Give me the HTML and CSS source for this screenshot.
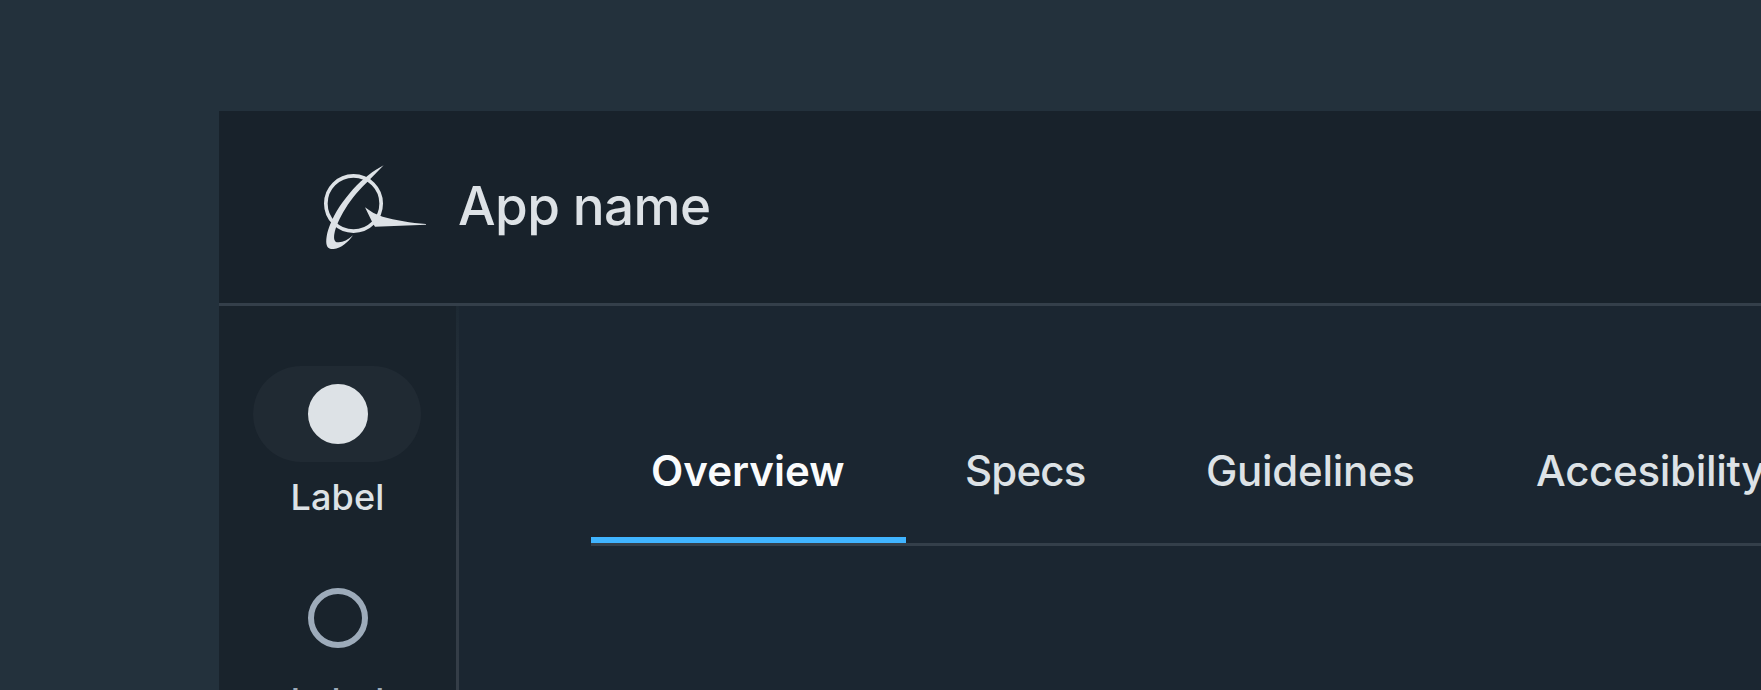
FILE: index.html
```
<!DOCTYPE html>
<html lang="en">
<head>
<meta charset="utf-8">
<title>App name</title>
<link rel="stylesheet" href="styles.css">
</head>
<body>
<div class="app">
  <header class="header">
    <svg class="logo" viewBox="0 0 390 315" aria-hidden="true">
      <circle cx="130.5" cy="145.5" r="83" fill="none" stroke="currentColor" stroke-width="11"/>
      <path fill="currentColor" d="M221 31C190 48 160 69 129 103C96 141 75 173 61 207C51 231 48 250 49 265C51 279 58 283 71 282C94 280 113 263 129 241C113 255 98 263 84 262C72 262 71 250 73 237C77 214 89 188 106 161C127 127 150 102 175 78Z"/>
      <path fill="currentColor" d="M165 157C181 169 196 179 218 185C256 196 303 203 348 207V209L195 215L188 204Z"/>
    </svg>
    <h1 class="title">App name</h1>
  </header>
  <div class="body">
    <nav class="rail">
      <a class="rail-item rail-item-active">
        <span class="pill"><span class="dot"></span></span>
        <span class="rail-label">Label</span>
      </a>
      <a class="rail-item">
        <span class="pill"><span class="dot"></span></span>
        <span class="rail-label">Label</span>
      </a>
    </nav>
    <main class="main">
      <nav class="tabs">
        <a class="tab tab-active">Overview</a>
        <a class="tab tab-specs">Specs</a>
        <a class="tab tab-guidelines">Guidelines</a>
        <a class="tab tab-accessibility">Accesibility</a>
      </nav>
    </main>
  </div>
</div>
</body>
</html>
```
FILE: styles.css
```
* { box-sizing: border-box; }

body {
  margin: 0;
  height: 690px;
  overflow: hidden;
  padding: 111px 0 0 219px;
  background: #23313c;
  color: #dde2e6;
  font-family: Inter, "Noto Sans", sans-serif;
  font-weight: 500;
}

.app {
  height: 579px;
  display: flex;
  flex-direction: column;
  overflow: hidden;
}

.header {
  flex: none;
  height: 195px;
  display: flex;
  padding: 44px 0 0 91px;
  background: #18222b;
  border-bottom: 3px solid #343f4a;
}

.logo { width: 130px; height: 105px; flex: none; }

.title {
  margin: 18px 0 0 18px;
  font-size: 53px;
  line-height: 66px;
  font-weight: 540;
  letter-spacing: -0.6px;
}

.body { flex: 1; display: flex; min-height: 0; }

.rail {
  flex: none;
  width: 240px;
  padding: 60px 0 0 0;
  display: flex;
  flex-direction: column;
  align-items: center;
  gap: 60px;
  background: #19232c;
  border-right: 3px solid;
  border-image: linear-gradient(#1d2933, #343d47 60%) 1;
  border-width: 0 3px 0 0;
}

.rail-item {
  width: 237px;
  height: 144px;
  flex: none;
  display: flex;
  flex-direction: column;
  align-items: center;
  color: #9dabba;
}

.rail-item-active { color: #dde2e6; }

.pill {
  width: 168px;
  height: 96px;
  flex: none;
  margin-right: 1px;
  border-radius: 48px;
  display: flex;
  align-items: center;
  justify-content: center;
}

.rail-item-active .pill { background: #202a33; }

.dot {
  width: 60px;
  height: 60px;
  margin-left: 1px;
  border-radius: 50%;
  border: 6px solid currentColor;
}

.rail-item-active .dot { background: currentColor; }

.rail-label {
  margin-top: 11px;
  font-size: 36px;
  line-height: 48px;
  letter-spacing: 0.1px;
}

.main {
  flex: 1;
  min-width: 0;
  padding: 114px 0 0 132px;
  background: #1b2631;
}

.tabs {
  display: flex;
  height: 126px;
  border-bottom: 3px solid #343f4a;
  overflow: hidden;
}

.tab {
  flex: none;
  height: 123px;
  padding: 25px 0 0 60px;
  font-size: 42px;
  line-height: 51px;
  white-space: nowrap;
}

.tab-active {
  width: 315px;
  color: #fafbfc;
  font-weight: 620;
  border-bottom: 6px solid #40b4ff;
}

.tab-specs { width: 240px; padding-left: 59px; letter-spacing: -0.8px; }
.tab-guidelines { width: 330px; letter-spacing: -0.3px; }
.tab-accessibility { width: 345px; letter-spacing: -0.3px; }
```
